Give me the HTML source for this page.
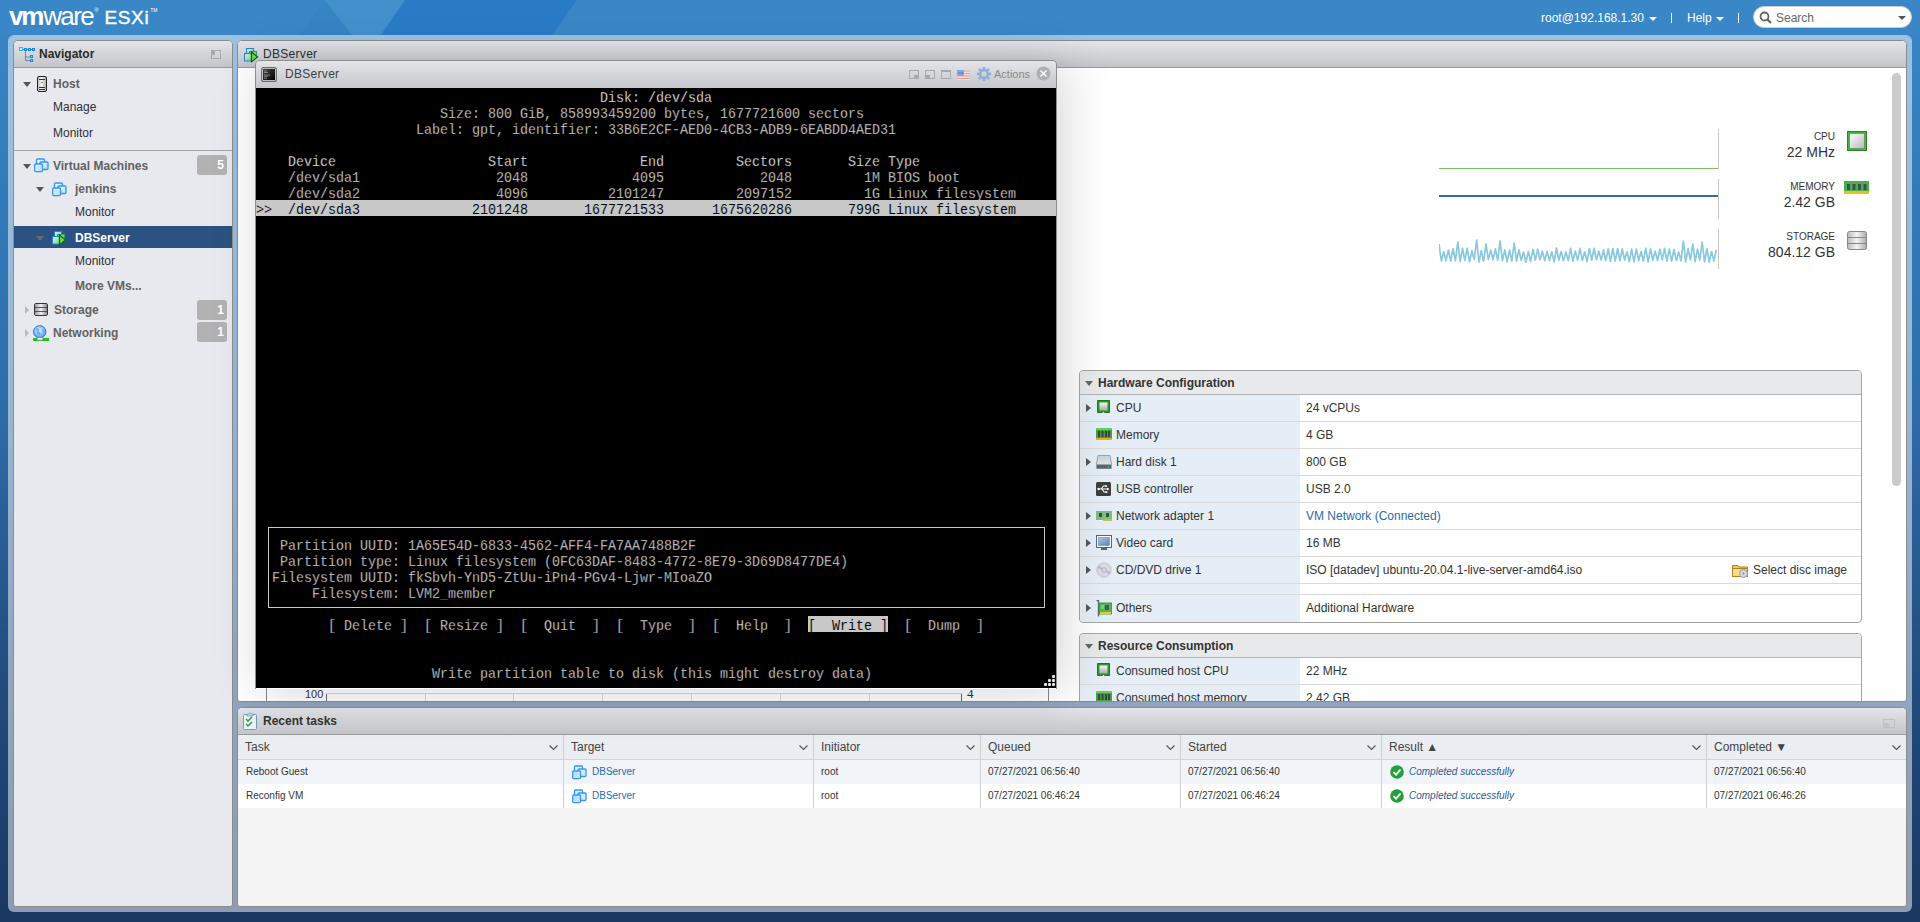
<!DOCTYPE html>
<html><head><meta charset="utf-8">
<style>
*{box-sizing:border-box;margin:0;padding:0}
html,body{width:1920px;height:922px;overflow:hidden}
body{position:relative;font-family:"Liberation Sans",sans-serif;font-size:12px;color:#333;
background:linear-gradient(to bottom,#3987c6 0px,#3784c4 40px,#2f6dab 400px,#224a7b 700px,#1a3862 922px)}
.abs{position:absolute}
.th{position:absolute;top:0;height:24px;border-right:1px solid #d0d0d0}
.th span{position:absolute;left:7px;top:5px;font-size:12px;color:#444;white-space:nowrap}
.chev{position:absolute;top:10px}
.tr{position:absolute;left:0;width:1668px;height:24px}
.tc{position:absolute;top:0;height:24px;border-right:1px solid #d0d0d0}
.td{position:absolute;top:6px;font-size:10px;color:#333;white-space:nowrap}
.td.link{color:#2c6ca8}
.td.ok{color:#2c5a98;font-style:italic}
.lbl{left:1547px;width:50px;text-align:right;font-size:10px;color:#333;line-height:12px}
.val{left:1497px;width:100px;text-align:right;font-size:14px;color:#333;line-height:18px}
.box{position:absolute;border:1px solid #a4a4a4;border-radius:4px;background:#fff;overflow:hidden}
.bh{position:absolute;left:0;top:0;width:100%;height:24px;background:#e8e9eb;border-bottom:1px solid #b4b4b4}
.bt{position:absolute;left:18px;top:5px;font-weight:bold;font-size:12px;color:#333}
.hr{position:absolute;left:0;width:781px;border-bottom:1px solid #dadada}
.hl{position:absolute;left:0;top:0;width:220px;height:100%;background:#e5eef6}
.ar{position:absolute;left:6px;width:0;height:0;border-top:4px solid transparent;border-bottom:4px solid transparent;border-left:5px solid #555}
.hlab{position:absolute;left:36px;top:6px;font-size:12px;color:#333;white-space:nowrap}
.hval{position:absolute;left:226px;top:6px;font-size:12px;color:#333;white-space:nowrap}
.hval.link{color:#2c6ca8}
#hdr{left:0;top:0;width:1920px;height:35px;background:#3987c7;overflow:hidden}
#frame{left:8px;top:35px;width:1904px;height:877px;border-radius:6px;background:rgba(255,255,255,.5)}
.panel{position:absolute;border:1px solid #8c8c8c;border-radius:5px 5px 3px 3px;overflow:hidden}
.ph{position:absolute;left:0;top:0;right:0;height:27px;border-bottom:1px solid #9a9a9a;
background:linear-gradient(to bottom,#e4e5e9,#c4c5ca)}
.ph .t{position:absolute;top:6px;font-weight:bold;font-size:12px;color:#333}
#nav{left:13px;top:40px;width:220px;height:867px;background:#e8e9ee}
#main{left:237px;top:40px;width:1670px;height:662px;background:#fff}
#tasks{left:237px;top:707px;width:1670px;height:200px;background:#f3f3f3}
.ni{position:absolute;font-size:12px;line-height:14px;white-space:nowrap}
.ni.b{font-weight:bold;color:#626262}
.ni.r{color:#2f2f3a}
.tri{position:absolute;width:0;height:0;border-left:4px solid transparent;border-right:4px solid transparent;border-top:5px solid #555}
.trir{position:absolute;width:0;height:0;border-top:4px solid transparent;border-bottom:4px solid transparent;border-left:4px solid #b8b8b8}
.badge{position:absolute;left:183px;width:30px;height:20px;border-radius:3px;background:#b2b2b2;color:#fff;font-weight:bold;font-size:12px;text-align:right;padding-right:3px;line-height:20px}
#con{left:255px;top:60px;width:802px;height:629px;border:1px solid #8e8e8e;border-bottom:none;border-radius:5px 5px 0 0;overflow:hidden;
box-shadow:6px 2px 50px rgba(0,0,0,.17)}
#con .ph{height:28px;border-bottom:none}
#term{position:absolute;left:0px;top:27px;width:800px;height:600px;background:#000;overflow:hidden}
#term pre{position:absolute;left:0;margin-top:3px;font-family:"Liberation Mono",monospace;font-size:15px;line-height:16px;color:#e6e6e6;white-space:pre;transform:scaleX(0.88889);transform-origin:0 0;-webkit-text-stroke:0.3px #000}
#term pre.br{color:#fff}
</style></head><body>
<div id="hdr" class="abs">
  <svg class="abs" style="left:0;top:0" width="1920" height="35">
    <polygon points="324,0 405,0 381,35 352,35" fill="#4290cc"/>
    <polygon points="324,0 300,35 352,35" fill="#3584c4"/>
    <polygon points="405,0 577,0 552,35 381,35" fill="#2a7bc6"/>
  </svg>
  <div class="abs" style="left:9px;top:1px;color:#fff;white-space:nowrap">
    <span style="font-size:26px;font-weight:bold;letter-spacing:-2.2px">vm</span><span style="font-size:26px;letter-spacing:-1.6px;margin-left:1px">ware</span><span style="font-size:6px;vertical-align:13px;margin-left:1px">&#174;</span><span style="font-size:19px;margin-left:6px;letter-spacing:0.6px;vertical-align:1px;-webkit-text-stroke:0.4px #fff">ESXi</span><span style="font-size:5px;vertical-align:13px;margin-left:1px">TM</span>
  </div>
  <div class="abs" style="left:1541px;top:11px;color:#fff;font-size:12px;white-space:nowrap">root@192.168.1.30</div>
  <div class="abs" style="left:1649px;top:17px;width:0;height:0;border-left:4px solid transparent;border-right:4px solid transparent;border-top:4px solid #fff"></div>
  <div class="abs" style="left:1671px;top:13px;width:1px;height:10px;background:#fff"></div>
  <div class="abs" style="left:1687px;top:11px;color:#fff;font-size:12px">Help</div>
  <div class="abs" style="left:1716px;top:17px;width:0;height:0;border-left:4px solid transparent;border-right:4px solid transparent;border-top:4px solid #fff"></div>
  <div class="abs" style="left:1738px;top:13px;width:1px;height:10px;background:#fff"></div>
  <div class="abs" style="left:1753px;top:6px;width:159px;height:22px;border-radius:11px;background:#fff;border:1px solid #ccc"></div>
  <svg class="abs" style="left:1759px;top:11px" width="14" height="14"><circle cx="5.5" cy="5.5" r="4" fill="none" stroke="#666" stroke-width="1.8"/><line x1="8.5" y1="8.5" x2="12" y2="12" stroke="#666" stroke-width="2.2"/></svg>
  <div class="abs" style="left:1776px;top:11px;color:#666;font-size:12px">Search</div>
  <div class="abs" style="left:1898px;top:16px;width:0;height:0;border-left:4px solid transparent;border-right:4px solid transparent;border-top:4px solid #555"></div>
</div>
<div id="frame" class="abs"></div>

<div id="nav" class="panel">
  <div class="ph">
    <svg class="abs" style="left:4px;top:5px" width="18" height="18" viewBox="0 0 18 18"><path d="M5 3.5H17 M7.5 5V14.5 M7.5 11H12 M7.5 14.5H12" stroke="#6a8aaa" stroke-width="1" fill="none"/><rect x="1.5" y="1.5" width="3" height="3" fill="#d0f4ff" stroke="#40b0f0"/><rect x="6.5" y="2.5" width="2" height="2" fill="#9cd0ff" stroke="#1a84e8"/><rect x="10.5" y="2.5" width="2" height="2" fill="#9cd0ff" stroke="#1a84e8"/><rect x="14.5" y="2.5" width="2" height="2" fill="#9cd0ff" stroke="#1a84e8"/><rect x="12.5" y="9.5" width="2" height="2" fill="#9cd0ff" stroke="#1a84e8"/><rect x="12.5" y="13.5" width="2" height="2" fill="#9cd0ff" stroke="#1a84e8"/></svg>
    <span class="t" style="left:25px;top:6px;color:#2a2a2a">Navigator</span>
    <div class="abs" style="left:197px;top:9px;width:10px;height:9px;border:1px solid #a8a9ad"><div style="width:3px;height:4px;background:#a8a9ad"></div></div>
  </div>
  <div class="tri" style="left:9px;top:41px"></div>
  <svg class="abs" style="left:23px;top:35px" width="10" height="16" viewBox="0 0 10 16"><defs><linearGradient id="hg" x1="0" x2="1"><stop offset="0" stop-color="#b8b8b8"/><stop offset=".45" stop-color="#f4f4f4"/><stop offset="1" stop-color="#a8a8a8"/></linearGradient></defs><rect x="0.5" y="0.5" width="9" height="15" rx="1.5" fill="url(#hg)" stroke="#222"/><path d="M2 3.5H8 M2 11.5H8 M2 13.5H8" stroke="#333"/><rect x="4.5" y="6" width="1" height="1" fill="#333"/></svg>
  <div class="ni b" style="left:39px;top:36px">Host</div>
  <div class="ni r" style="left:39px;top:59px">Manage</div>
  <div class="ni r" style="left:39px;top:85px">Monitor</div>
  <div class="abs" style="left:0;top:109px;width:218px;height:1px;background:#a6a6a6"></div>
  <div class="tri" style="left:9px;top:123px"></div>
  <svg class="abs" style="left:20px;top:117px" width="15" height="15" viewBox="0 0 15 15"><defs><linearGradient id="vmg20117" x1="0" y1="0" x2="1" y2="1"><stop offset="0" stop-color="#f0fbff"/><stop offset="1" stop-color="#b0dcfa"/></linearGradient></defs><rect x="2.5" y="1" width="8" height="6.5" rx="1" fill="url(#vmg20117)" stroke="#3a94ec" stroke-width="1.3"/><rect x="6" y="4" width="8" height="7.5" rx="1" fill="url(#vmg20117)" stroke="#3a94ec" stroke-width="1.3"/><rect x="0.7" y="6" width="7.8" height="7.6" rx="1" fill="url(#vmg20117)" stroke="#3a94ec" stroke-width="1.3"/><path d="M2 9H7 M4 7V13" stroke="#bfe0f8" stroke-width=".6"/></svg>
  <div class="ni b" style="left:39px;top:118px">Virtual Machines</div>
  <div class="badge" style="top:114px">5</div>
  <div class="tri" style="left:22px;top:146px"></div>
  <svg class="abs" style="left:38px;top:141px" width="15" height="15" viewBox="0 0 15 15"><defs><linearGradient id="vmg38141" x1="0" y1="0" x2="1" y2="1"><stop offset="0" stop-color="#f0fbff"/><stop offset="1" stop-color="#b0dcfa"/></linearGradient></defs><rect x="2.5" y="1" width="8" height="6.5" rx="1" fill="url(#vmg38141)" stroke="#3a94ec" stroke-width="1.3"/><rect x="6" y="4" width="8" height="7.5" rx="1" fill="url(#vmg38141)" stroke="#3a94ec" stroke-width="1.3"/><rect x="0.7" y="6" width="7.8" height="7.6" rx="1" fill="url(#vmg38141)" stroke="#3a94ec" stroke-width="1.3"/><path d="M2 9H7 M4 7V13" stroke="#bfe0f8" stroke-width=".6"/></svg>
  <div class="ni b" style="left:61px;top:141px">jenkins</div>
  <div class="ni r" style="left:61px;top:164px">Monitor</div>
  <div class="abs" style="left:0;top:185px;width:218px;height:22px;background:#2c5281"></div>
  <div class="tri" style="left:22px;top:195px;border-top-color:#6b6b6b"></div>
  <svg class="abs" style="left:38px;top:190px" width="15" height="15" viewBox="0 0 15 15"><defs><linearGradient id="dbgn" x1="0" y1="0" x2="1" y2="1"><stop offset="0" stop-color="#e8fbff"/><stop offset="1" stop-color="#70d070"/></linearGradient></defs><rect x="2.5" y="0.5" width="7" height="6" fill="url(#dbgn)" stroke="#2a84e8" stroke-width="1.1"/><rect x="5.5" y="3.5" width="7" height="6" fill="#8ad890" stroke="#2aa080" stroke-width="1.1"/><rect x="0.5" y="5.5" width="7" height="7.5" fill="url(#dbgn)" stroke="#2a84e8" stroke-width="1.1"/><path d="M7.5 4 L13.6 9 L7.5 13.8 Z" fill="#74d848" stroke="#0a6a0a" stroke-width="1.2" stroke-linejoin="miter"/></svg>
  <div class="ni b" style="left:61px;top:190px;color:#fff">DBServer</div>
  <div class="ni r" style="left:61px;top:213px">Monitor</div>
  <div class="ni b" style="left:61px;top:238px">More VMs...</div>
  <div class="trir" style="left:11px;top:265px"></div>
  <svg class="abs" style="left:20px;top:262px" width="14" height="13" viewBox="0 0 14 13"><rect x="0.5" y="0.5" width="13" height="12" rx="1.5" fill="#ddd" stroke="#333"/><rect x="1" y="1" width="12" height="11" fill="url(#sg)"/><path d="M1 4.5H13 M1 8.5H13" stroke="#555"/><defs><linearGradient id="sg" x1="0" x2="1"><stop offset="0" stop-color="#9a9a9a"/><stop offset=".5" stop-color="#f2f2f2"/><stop offset="1" stop-color="#8a8a8a"/></linearGradient></defs></svg>
  <div class="ni b" style="left:40px;top:262px">Storage</div>
  <div class="badge" style="top:259px">1</div>
  <div class="trir" style="left:11px;top:288px"></div>
  <svg class="abs" style="left:18px;top:284px" width="17" height="17" viewBox="0 0 17 17"><defs><radialGradient id="glg" cx=".45" cy=".4" r=".6"><stop offset="0" stop-color="#e8f6ff"/><stop offset=".6" stop-color="#8cc0f8"/><stop offset="1" stop-color="#4a90e8"/></radialGradient></defs><circle cx="7.7" cy="6.8" r="6.2" fill="url(#glg)" stroke="#2a7ae0" stroke-width="1"/><path d="M4 3.5 Q6 3 7.5 4.5 Q6 6 8 7.5 Q9.5 8.5 8 10.5 Q6 9.5 5 8 Q5.5 6 4 5Z" fill="#5a98e8" opacity=".7"/><path d="M10 4 Q12 5 12 7 Q11 6.5 10 5.5Z" fill="#5a98e8" opacity=".7"/><rect x="1" y="13" width="16" height="3" fill="#1cc81c"/><rect x="5" y="12.6" width="6" height="2.6" rx="1" fill="#f4f4f4" stroke="#666" stroke-width=".6"/></svg>
  <div class="ni b" style="left:39px;top:285px">Networking</div>
  <div class="badge" style="top:281px">1</div>
</div>

<div id="main" class="panel">
  <div class="ph">
    <svg class="abs" style="left:6px;top:7px" width="15" height="15" viewBox="0 0 15 15"><defs><linearGradient id="dbgm" x1="0" y1="0" x2="1" y2="1"><stop offset="0" stop-color="#e8fbff"/><stop offset="1" stop-color="#70d070"/></linearGradient></defs><rect x="2.5" y="0.5" width="7" height="6" fill="url(#dbgm)" stroke="#2a84e8" stroke-width="1.1"/><rect x="5.5" y="3.5" width="7" height="6" fill="#8ad890" stroke="#2aa080" stroke-width="1.1"/><rect x="0.5" y="5.5" width="7" height="7.5" fill="url(#dbgm)" stroke="#2a84e8" stroke-width="1.1"/><path d="M7.5 4 L13.6 9 L7.5 13.8 Z" fill="#74d848" stroke="#0a6a0a" stroke-width="1.2" stroke-linejoin="miter"/></svg>
    <span class="t" style="left:25px;top:6px;color:#2e2e2e;font-weight:normal;letter-spacing:0.3px">DBServer</span>
  </div>
  <!-- performance charts -->
  <div class="abs" style="left:1480px;top:88px;width:1px;height:40px;background:#c8c8c8"></div>
  <div class="abs" style="left:1201px;top:127px;width:279px;height:1px;background:#7cc05c"></div>
  <div class="abs" style="left:1480px;top:138px;width:1px;height:40px;background:#c8c8c8"></div>
  <div class="abs" style="left:1201px;top:154px;width:279px;height:2px;background:#3a68a0"></div>
  <div class="abs" style="left:1480px;top:188px;width:1px;height:40px;background:#c8c8c8"></div>
  <svg class="abs" style="left:1201px;top:190px" width="280" height="36"><polyline points="0.0,13.0 2.3,30.0 4.7,20.7 7.0,29.8 9.4,19.0 11.7,30.1 14.1,17.7 16.4,29.9 18.8,11.0 21.1,30.6 23.5,17.4 25.8,29.3 28.2,17.4 30.5,30.7 32.9,19.8 35.2,28.6 37.6,9.0 39.9,31.1 42.3,19.6 44.6,30.2 47.0,13.0 49.3,28.5 51.7,19.1 54.0,28.7 56.4,17.8 58.7,29.2 61.1,10.0 63.4,29.8 65.8,18.8 68.1,30.8 70.5,19.1 72.8,30.2 75.2,12.0 77.5,30.3 79.9,18.8 82.2,29.3 84.6,21.0 86.9,31.2 89.3,20.4 91.6,30.4 94.0,18.3 96.3,29.1 98.7,18.2 101.0,28.7 103.4,20.1 105.7,29.6 108.1,20.4 110.4,29.5 112.8,20.8 115.1,30.8 117.5,17.0 119.8,29.1 122.2,20.6 124.5,29.8 126.9,20.9 129.2,29.6 131.6,17.3 133.9,30.2 136.3,20.1 138.6,29.2 141.0,17.3 143.3,29.4 145.7,20.9 148.0,30.5 150.4,17.5 152.7,29.2 155.1,17.4 157.4,28.7 159.8,20.2 162.1,29.0 164.5,19.2 166.8,29.7 169.2,17.8 171.5,30.5 173.9,17.5 176.2,30.2 178.6,17.5 180.9,29.6 183.3,17.9 185.6,29.2 188.0,20.9 190.3,30.7 192.7,18.2 195.0,30.9 197.4,17.8 199.7,29.6 202.1,20.4 204.4,30.2 206.8,17.4 209.1,31.2 211.5,17.9 213.8,29.2 216.2,20.1 218.5,29.4 220.9,18.2 223.2,28.7 225.6,17.4 227.9,30.1 230.3,18.0 232.6,30.1 235.0,18.5 237.3,29.7 239.7,20.8 242.0,29.8 244.4,10.0 246.7,30.8 249.1,17.7 251.4,28.9 253.8,13.0 256.1,30.7 258.5,18.0 260.8,29.0 263.2,11.0 265.5,31.0 267.9,17.8 270.2,31.1 272.6,20.5 274.9,30.1 277.3,18.7" fill="none" stroke="#88c8e0" stroke-width="1.7" stroke-linejoin="round"/></svg>
  <div class="abs lbl" style="top:90px">CPU</div>
  <div class="abs val" style="top:102px">22 MHz</div>
  <div class="abs lbl" style="top:140px">MEMORY</div>
  <div class="abs val" style="top:152px">2.42 GB</div>
  <div class="abs lbl" style="top:190px">STORAGE</div>
  <div class="abs val" style="top:202px">804.12 GB</div>
  <svg class="abs" style="left:1609px;top:90px" width="20" height="20" viewBox="0 0 20 20"><rect x="0.5" y="0.5" width="19" height="19" fill="#3cb83c" stroke="#1e8a1e"/><rect x="2.5" y="2.5" width="15" height="15" fill="url(#cpug)" stroke="#6a8a6a" stroke-width=".8"/><defs><linearGradient id="cpug" x1="0" y1="0" x2="1" y2="1"><stop offset="0" stop-color="#fff"/><stop offset="1" stop-color="#b8b8b8"/></linearGradient></defs></svg>
  <svg class="abs" style="left:1606px;top:140px" width="25" height="13" viewBox="0 0 25 13"><rect x="0" y="0" width="25" height="10" fill="#48b048"/><rect x="0" y="10" width="25" height="3" fill="#e8c020"/><rect x="3" y="3" width="3" height="6" fill="#4a4a5a"/><rect x="8.5" y="3" width="3" height="6" fill="#4a4a5a"/><rect x="14" y="3" width="3" height="6" fill="#4a4a5a"/><rect x="19.5" y="3" width="3" height="6" fill="#4a4a5a"/></svg>
  <svg class="abs" style="left:1609px;top:190px" width="20" height="19" viewBox="0 0 20 19"><rect x="0.5" y="0.5" width="19" height="18" rx="2" fill="url(#stg)" stroke="#888"/><path d="M1 6.5H19 M1 12.5H19" stroke="#888"/><defs><linearGradient id="stg" x1="0" x2="1"><stop offset="0" stop-color="#bbb"/><stop offset=".5" stop-color="#f4f4f4"/><stop offset="1" stop-color="#aaa"/></linearGradient></defs></svg>
  <!-- scrollbar -->
  <div class="abs" style="left:1654px;top:32px;width:9px;height:413px;border-radius:5px;background:#cbcbcb"></div>
  <div class="box" style="left:841px;top:329px;width:783px;height:253px">
  <div class="bh"><div class="tri" style="left:5px;top:10px;border-top-color:#666"></div><span class="bt">Hardware Configuration</span></div>
  <div class="abs" style="left:0;top:24px;width:781px;height:228px"><div class="hr" style="top:0px;height:27px"><div class="hl"></div><div class="ar" style="top:9px"></div><svg class="abs" style="left:17px;top:5px" width="13" height="13" viewBox="0 0 13 13"><path d="M0.5 0.5H12.5V12.5H8L6.5 11.5L5 12.5H0.5Z" fill="#2c9a2c" stroke="#1a7a1a"/><rect x="2.5" y="2.5" width="8" height="8" fill="url(#cpug2)"/><defs><linearGradient id="cpug2" x1="0" y1="0" x2="0" y2="1"><stop offset="0" stop-color="#f8f8f8"/><stop offset="1" stop-color="#a8a8a8"/></linearGradient></defs></svg><span class="hlab">CPU</span><span class="hval">24 vCPUs</span></div><div class="hr" style="top:27px;height:27px"><div class="hl"></div><svg class="abs" style="left:16px;top:6px" width="16" height="12" viewBox="0 0 16 12"><rect x="0" y="0" width="16" height="10" fill="#3aa83a"/><rect x="0" y="0" width="16" height="2" fill="#6ccc5c"/><rect x="0" y="10" width="16" height="2" fill="#e8b020"/><rect x="2" y="3" width="2" height="6" fill="#4a3a4a"/><rect x="5.5" y="3" width="2" height="6" fill="#4a3a4a"/><rect x="9" y="3" width="2" height="6" fill="#4a3a4a"/><rect x="12" y="3" width="2" height="6" fill="#4a3a4a"/></svg><span class="hlab">Memory</span><span class="hval">4 GB</span></div><div class="hr" style="top:54px;height:27px"><div class="hl"></div><div class="ar" style="top:9px"></div><svg class="abs" style="left:16px;top:6px" width="16" height="14" viewBox="0 0 16 14"><path d="M2 0.5H14L15.5 9V13.5H0.5V9Z" fill="url(#hdg)" stroke="#9aa4ac"/><rect x="1" y="9.5" width="14" height="4" fill="#5a6670"/><rect x="12" y="11" width="1" height="1.5" fill="#4c4"/><defs><linearGradient id="hdg" x1="0" y1="0" x2="0" y2="1"><stop offset="0" stop-color="#c8d0d8"/><stop offset="1" stop-color="#e8ecf0"/></linearGradient></defs></svg><span class="hlab">Hard disk 1</span><span class="hval">800 GB</span></div><div class="hr" style="top:81px;height:27px"><div class="hl"></div><svg class="abs" style="left:16px;top:6px" width="15" height="14" viewBox="0 0 15 14"><rect x="0" y="0" width="15" height="14" rx="1.5" fill="#3e3e3e"/><path d="M2 7H13 M5 7L7.5 4H9.5 M6 7L8 10H10" stroke="#fff" stroke-width="1.1" fill="none"/><path d="M13 7L11 5.5V8.5Z" fill="#fff"/><circle cx="2.5" cy="7" r="1.2" fill="#fff"/><circle cx="10" cy="4" r="1" fill="#fff"/><rect x="9.5" y="9.2" width="1.8" height="1.8" fill="#fff"/></svg><span class="hlab">USB controller</span><span class="hval">USB 2.0</span></div><div class="hr" style="top:108px;height:27px"><div class="hl"></div><div class="ar" style="top:9px"></div><svg class="abs" style="left:16px;top:8px" width="16" height="10" viewBox="0 0 16 10"><rect x="0" y="0" width="16" height="9" fill="#7cc07c"/><rect x="3" y="2" width="3" height="4" fill="#3a4a5a"/><rect x="10" y="2" width="3" height="4" fill="#3a4a5a"/><rect x="7" y="8" width="9" height="2" fill="#c8c040"/><rect x="3" y="9" width="3" height="1" fill="#fff"/></svg><span class="hlab">Network adapter 1</span><span class="hval link">VM Network (Connected)</span></div><div class="hr" style="top:135px;height:27px"><div class="hl"></div><div class="ar" style="top:9px"></div><svg class="abs" style="left:16px;top:5px" width="16" height="15" viewBox="0 0 16 15"><rect x="0.5" y="0.5" width="15" height="12" fill="#fff" stroke="#4a6a8a"/><rect x="2.5" y="2.5" width="11" height="8" fill="url(#vg)" stroke="#5a7a9a" stroke-width=".5"/><rect x="5" y="13" width="6" height="2" fill="#4a6a8a"/><defs><linearGradient id="vg" x1="0" y1="0" x2="1" y2="1"><stop offset="0" stop-color="#a8c8e8"/><stop offset="1" stop-color="#5a88b8"/></linearGradient></defs></svg><span class="hlab">Video card</span><span class="hval">16 MB</span></div><div class="hr" style="top:162px;height:27px"><div class="hl"></div><div class="ar" style="top:9px"></div><svg class="abs" style="left:16px;top:5px" width="16" height="16" viewBox="0 0 16 16"><circle cx="8" cy="8" r="7.3" fill="url(#cdg)" stroke="#c4c4c8" stroke-width=".7"/><path d="M8 8L3 3.5A7 7 0 0 0 1.5 6Z M8 8L13 12.5A7 7 0 0 0 14.5 10Z" fill="#b0a0e0" opacity=".7"/><circle cx="8" cy="8" r="2.4" fill="#dde" stroke="#9ab" stroke-width="1"/><defs><radialGradient id="cdg"><stop offset="0" stop-color="#f0f0f4"/><stop offset="1" stop-color="#d0d0d8"/></radialGradient></defs></svg><span class="hlab">CD/DVD drive 1</span><span class="hval">ISO [datadev] ubuntu-20.04.1-live-server-amd64.iso</span><svg class="abs" style="left:652px;top:6px" width="17" height="15" viewBox="0 0 17 15"><path d="M0.5 2.5H6L7 4H15.5V13.5H0.5Z" fill="#f0c860" stroke="#b08020"/><path d="M0.5 5.5H15.5V13.5H0.5Z" fill="#f8dc88" stroke="#b08020"/><circle cx="11.5" cy="10.5" r="4" fill="#d8d8dc" stroke="#999"/><circle cx="11.5" cy="10.5" r="1" fill="#888"/></svg><span class="hval" style="left:673px">Select disc image</span></div><div class="hr" style="top:189px;height:11px"><div class="hl"></div></div><div class="hr" style="top:200px;height:28px"><div class="hl"></div><div class="ar" style="top:9px"></div><svg class="abs" style="left:16px;top:5px" width="16" height="17" viewBox="0 0 16 17"><path d="M0.5 0.5H2.5V16.5" stroke="#5a6a8a" stroke-width="1.4" fill="none"/><rect x="3" y="3" width="13" height="11" fill="#52b852" stroke="#2a8a2a" stroke-width=".8"/><rect x="9" y="5" width="4" height="5" fill="#555"/><rect x="4" y="12" width="11" height="2" fill="#e8d030"/><path d="M5 6H8M5 8H8" stroke="#d8f0a0" stroke-width=".8"/></svg><span class="hlab">Others</span><span class="hval">Additional Hardware</span></div></div>
</div>
  <div class="box" style="left:841px;top:592px;width:783px;height:120px">
  <div class="bh"><div class="tri" style="left:5px;top:10px;border-top-color:#666"></div><span class="bt">Resource Consumption</span></div>
  <div class="abs" style="left:0;top:24px;width:781px;height:90px"><div class="hr" style="top:0px;height:27px"><div class="hl"></div><svg class="abs" style="left:17px;top:5px" width="13" height="13" viewBox="0 0 13 13"><path d="M0.5 0.5H12.5V12.5H8L6.5 11.5L5 12.5H0.5Z" fill="#2c9a2c" stroke="#1a7a1a"/><rect x="2.5" y="2.5" width="8" height="8" fill="url(#cpug2)"/><defs><linearGradient id="cpug2" x1="0" y1="0" x2="0" y2="1"><stop offset="0" stop-color="#f8f8f8"/><stop offset="1" stop-color="#a8a8a8"/></linearGradient></defs></svg><span class="hlab">Consumed host CPU</span><span class="hval">22 MHz</span></div><div class="hr" style="top:27px;height:27px"><div class="hl"></div><svg class="abs" style="left:16px;top:6px" width="16" height="12" viewBox="0 0 16 12"><rect x="0" y="0" width="16" height="10" fill="#3aa83a"/><rect x="0" y="0" width="16" height="2" fill="#6ccc5c"/><rect x="0" y="10" width="16" height="2" fill="#e8b020"/><rect x="2" y="3" width="2" height="6" fill="#4a3a4a"/><rect x="5.5" y="3" width="2" height="6" fill="#4a3a4a"/><rect x="9" y="3" width="2" height="6" fill="#4a3a4a"/><rect x="12" y="3" width="2" height="6" fill="#4a3a4a"/></svg><span class="hlab">Consumed host memory</span><span class="hval">2.42 GB</span></div></div>
</div>
  <!-- chart axis under console -->
  <div class="abs" style="left:28px;top:647px;width:1px;height:14px;background:#888"></div>
  <div class="abs" style="left:88px;top:652px;width:636px;height:1px;background:#d6d6d6"></div>
  <div class="abs" style="left:67px;top:647px;font-size:11px;color:#333">100</div>
  <div class="abs" style="left:88px;top:653px;width:1px;height:7px;background:#666"></div>
  <div class="abs" style="left:187px;top:653px;width:1px;height:7px;background:#d8d8d8"></div><div class="abs" style="left:275px;top:653px;width:1px;height:7px;background:#d8d8d8"></div><div class="abs" style="left:364px;top:653px;width:1px;height:7px;background:#d8d8d8"></div><div class="abs" style="left:453px;top:653px;width:1px;height:7px;background:#d8d8d8"></div><div class="abs" style="left:542px;top:653px;width:1px;height:7px;background:#d8d8d8"></div><div class="abs" style="left:631px;top:653px;width:1px;height:7px;background:#d8d8d8"></div>
  <div class="abs" style="left:723px;top:653px;width:1px;height:7px;background:#666"></div>
  <div class="abs" style="left:729px;top:645px;font-family:'Liberation Serif',serif;font-size:13px;color:#333">4</div>
  <div class="abs" style="left:810px;top:647px;width:1px;height:14px;background:#888"></div>
</div>

<div id="tasks" class="panel">
  <div class="ph">
    <svg class="abs" style="left:5px;top:4px" width="14" height="18" viewBox="0 0 14 18"><rect x="0.5" y="2.5" width="13" height="15" rx="1" fill="#eaf4fc" stroke="#7a9ab8"/><path d="M4 2.5 Q7 -0.5 10 2.5 V4 H4Z" fill="#bfe0f8" stroke="#5a9ad8" stroke-width=".8"/><path d="M3 7L5 9L9 5 M3 12L5 14L9 10" stroke="#2aa02a" stroke-width="1.4" fill="none"/></svg>
    <span class="t" style="left:25px;top:6px;color:#333">Recent tasks</span>
    <div class="abs" style="left:1645px;top:11px;width:12px;height:9px;border:1px solid #c0c1c5"><div style="position:absolute;left:0;bottom:0;width:5px;height:4px;background:#c0c1c5"></div></div>
  </div>
  <div class="abs" style="left:0;top:27px;width:1668px;height:25px;background:#eaedf1;border-bottom:1px solid #d4d4d4"><div class="th" style="left:0px;width:326px"><span>Task</span><svg class="chev" style="left:311px" width="9" height="6" viewBox="0 0 9 6"><path d="M0.5 0.5L4.5 4.5L8.5 0.5" stroke="#555" stroke-width="1.2" fill="none"/></svg></div><div class="th" style="left:325px;width:251px"><span style="left:8px">Target</span><svg class="chev" style="left:236px" width="9" height="6" viewBox="0 0 9 6"><path d="M0.5 0.5L4.5 4.5L8.5 0.5" stroke="#555" stroke-width="1.2" fill="none"/></svg></div><div class="th" style="left:575px;width:168px"><span style="left:8px">Initiator</span><svg class="chev" style="left:153px" width="9" height="6" viewBox="0 0 9 6"><path d="M0.5 0.5L4.5 4.5L8.5 0.5" stroke="#555" stroke-width="1.2" fill="none"/></svg></div><div class="th" style="left:742px;width:201px"><span style="left:8px">Queued</span><svg class="chev" style="left:186px" width="9" height="6" viewBox="0 0 9 6"><path d="M0.5 0.5L4.5 4.5L8.5 0.5" stroke="#555" stroke-width="1.2" fill="none"/></svg></div><div class="th" style="left:942px;width:202px"><span style="left:8px">Started</span><svg class="chev" style="left:187px" width="9" height="6" viewBox="0 0 9 6"><path d="M0.5 0.5L4.5 4.5L8.5 0.5" stroke="#555" stroke-width="1.2" fill="none"/></svg></div><div class="th" style="left:1143px;width:326px"><span style="left:8px">Result ▲</span><svg class="chev" style="left:311px" width="9" height="6" viewBox="0 0 9 6"><path d="M0.5 0.5L4.5 4.5L8.5 0.5" stroke="#555" stroke-width="1.2" fill="none"/></svg></div><div class="th" style="left:1468px;width:201px"><span style="left:8px">Completed ▼</span><svg class="chev" style="left:186px" width="9" height="6" viewBox="0 0 9 6"><path d="M0.5 0.5L4.5 4.5L8.5 0.5" stroke="#555" stroke-width="1.2" fill="none"/></svg></div></div>
  <div class="tr" style="top:52px;background:#f0f3f8"><div class="tc" style="left:0px;width:326px"><span class="td" style="left:8px">Reboot Guest</span></div><div class="tc" style="left:325px;width:251px"><svg class="abs" style="left:9px;top:5px" width="15" height="15" viewBox="0 0 15 15"><rect x="2.5" y="1" width="8" height="6.5" rx="1" fill="#d8f0ff" stroke="#3a94ec" stroke-width="1.3"/><rect x="6" y="4" width="8" height="7.5" rx="1" fill="#d0ecff" stroke="#3a94ec" stroke-width="1.3"/><rect x="0.7" y="6" width="7.8" height="7.6" rx="1" fill="#c8e8ff" stroke="#3a94ec" stroke-width="1.3"/><path d="M2 9H7 M4 7V13" stroke="#a8d4f8" stroke-width=".6"/></svg><span class="td link" style="left:29px">DBServer</span></div><div class="tc" style="left:575px;width:168px"><span class="td" style="left:8px">root</span></div><div class="tc" style="left:742px;width:201px"><span class="td" style="left:8px">07/27/2021 06:56:40</span></div><div class="tc" style="left:942px;width:202px"><span class="td" style="left:8px">07/27/2021 06:56:40</span></div><div class="tc" style="left:1143px;width:326px"><svg class="abs" style="left:9px;top:5px" width="14" height="14" viewBox="0 0 14 14"><circle cx="7" cy="7" r="6.8" fill="#23a03a"/><path d="M3.5 7.2L6 9.7L10.5 4.5" stroke="#fff" stroke-width="1.8" fill="none"/></svg><span class="td ok" style="left:28px">Completed successfully</span></div><div class="tc" style="left:1468px;width:201px"><span class="td" style="left:8px">07/27/2021 06:56:40</span></div></div><div class="tr" style="top:76px;background:#fff"><div class="tc" style="left:0px;width:326px"><span class="td" style="left:8px">Reconfig VM</span></div><div class="tc" style="left:325px;width:251px"><svg class="abs" style="left:9px;top:5px" width="15" height="15" viewBox="0 0 15 15"><rect x="2.5" y="1" width="8" height="6.5" rx="1" fill="#d8f0ff" stroke="#3a94ec" stroke-width="1.3"/><rect x="6" y="4" width="8" height="7.5" rx="1" fill="#d0ecff" stroke="#3a94ec" stroke-width="1.3"/><rect x="0.7" y="6" width="7.8" height="7.6" rx="1" fill="#c8e8ff" stroke="#3a94ec" stroke-width="1.3"/><path d="M2 9H7 M4 7V13" stroke="#a8d4f8" stroke-width=".6"/></svg><span class="td link" style="left:29px">DBServer</span></div><div class="tc" style="left:575px;width:168px"><span class="td" style="left:8px">root</span></div><div class="tc" style="left:742px;width:201px"><span class="td" style="left:8px">07/27/2021 06:46:24</span></div><div class="tc" style="left:942px;width:202px"><span class="td" style="left:8px">07/27/2021 06:46:24</span></div><div class="tc" style="left:1143px;width:326px"><svg class="abs" style="left:9px;top:5px" width="14" height="14" viewBox="0 0 14 14"><circle cx="7" cy="7" r="6.8" fill="#23a03a"/><path d="M3.5 7.2L6 9.7L10.5 4.5" stroke="#fff" stroke-width="1.8" fill="none"/></svg><span class="td ok" style="left:28px">Completed successfully</span></div><div class="tc" style="left:1468px;width:201px"><span class="td" style="left:8px">07/27/2021 06:46:26</span></div></div>
</div>

<div id="con" class="abs">
  <div class="ph">
    <svg class="abs" style="left:5px;top:6px" width="16" height="15" viewBox="0 0 16 15"><rect x="0.6" y="0.6" width="14.8" height="13.8" rx="2" fill="#d4d4d6" stroke="#6a6a6a" stroke-width="1.1"/><defs><linearGradient id="tg" x1="0" y1="0" x2="1" y2="1"><stop offset="0" stop-color="#444"/><stop offset="1" stop-color="#000"/></linearGradient></defs><rect x="2" y="2" width="12" height="11" fill="url(#tg)"/><path d="M3 4H6 M3 5.5H7 M3 8H9 M3 9.3H7 M3 11.2H6" stroke="#999" stroke-width=".8"/></svg>
    <span class="t" style="left:29px;top:6px;font-weight:normal;color:#404040;letter-spacing:0.3px">DBServer</span>
    <div class="abs" style="left:653px;top:9px;width:10px;height:9px;border:1px solid #a8a9ad"><div style="position:absolute;right:0;bottom:0;width:4px;height:3px;background:#a8a9ad"></div></div>
    <div class="abs" style="left:669px;top:9px;width:10px;height:9px;border:1px solid #a8a9ad"><div style="position:absolute;left:0;bottom:0;width:4px;height:3px;background:#a8a9ad"></div></div>
    <div class="abs" style="left:685px;top:9px;width:10px;height:9px;border:1px solid #a8a9ad;border-top-width:2px"></div>
    <svg class="abs" style="left:701px;top:9px" width="13" height="10" viewBox="0 0 13 10" opacity=".8"><rect x="0" y="0" width="13" height="10" fill="#f4eaea"/><path d="M0 1H13M0 3.5H13M0 6H13M0 8.5H13" stroke="#e88a80" stroke-width="1.1"/><rect x="0" y="0" width="7" height="6" fill="#7a98e6"/><circle cx="2.5" cy="3" r="1.3" fill="#5a7ad8"/><circle cx="5" cy="3" r="1.3" fill="#5a7ad8"/></svg>
    <svg class="abs" style="left:721px;top:6px" width="14" height="14" viewBox="0 0 14 14"><path d="M6.16 0.05 L7.84 0.05 L8.03 2.21 L9.66 2.88 L11.32 1.49 L12.51 2.68 L11.12 4.34 L11.79 5.97 L13.95 6.16 L13.95 7.84 L11.79 8.03 L11.12 9.66 L12.51 11.32 L11.32 12.51 L9.66 11.12 L8.03 11.79 L7.84 13.95 L6.16 13.95 L5.97 11.79 L4.34 11.12 L2.68 12.51 L1.49 11.32 L2.88 9.66 L2.21 8.03 L0.05 7.84 L0.05 6.16 L2.21 5.97 L2.88 4.34 L1.49 2.68 L2.68 1.49 L4.34 2.88 L5.97 2.21 Z" fill="#8ab2e4" stroke="#7a9ed0" stroke-width=".5"/><circle cx="7" cy="7" r="2.9" fill="#d2d3d7" stroke="#a8b0bc" stroke-width=".7"/></svg>
    <span class="abs" style="left:738px;top:7px;font-size:11px;color:#8a8a8a">Actions</span>
    <svg class="abs" style="left:780px;top:5px" width="15" height="15" viewBox="0 0 15 15"><circle cx="7.5" cy="7.5" r="7" fill="#aeafb2"/><path d="M4.5 4.5L10.5 10.5M10.5 4.5L4.5 10.5" stroke="#fff" stroke-width="1.4"/></svg>
  </div>
  <div id="term">
<div style="position:absolute;left:796px;top:587px;width:3px;height:3px;background:#e8e6dc;border-radius:1px"></div><div style="position:absolute;left:792px;top:591px;width:3px;height:3px;background:#e8e6dc;border-radius:1px"></div><div style="position:absolute;left:796px;top:591px;width:3px;height:3px;background:#e8e6dc;border-radius:1px"></div><div style="position:absolute;left:788px;top:595px;width:3px;height:3px;background:#e8e6dc;border-radius:1px"></div><div style="position:absolute;left:792px;top:595px;width:3px;height:3px;background:#e8e6dc;border-radius:1px"></div><div style="position:absolute;left:796px;top:595px;width:3px;height:3px;background:#e8e6dc;border-radius:1px"></div>
<div style="position:absolute;left:12px;top:439px;width:777px;height:81px;border:1px solid #c8c8c8"></div>
<pre style="top:0px" class="br">                                           Disk: /dev/sda</pre>
<pre style="top:16px">                       Size: 800 GiB, 858993459200 bytes, 1677721600 sectors</pre>
<pre style="top:32px">                    Label: gpt, identifier: 33B6E2CF-AED0-4CB3-ADB9-6EABDD4AED31</pre>
<pre style="top:64px" class="br">    Device                   Start              End         Sectors       Size Type</pre>
<pre style="top:80px">    /dev/sda1                 2048             4095            2048         1M BIOS boot</pre>
<pre style="top:96px">    /dev/sda2                 4096          2101247         2097152         1G Linux filesystem</pre>
<div style="position:absolute;left:0;top:112px;width:800px;height:16px;background:#c8c8c8"></div>
<pre style="top:112px;color:#000;-webkit-text-stroke:0.1px #c8c8c8">&gt;&gt;  /dev/sda3              2101248       1677721533      1675620286       799G Linux filesystem</pre>
<pre style="top:448px">   Partition UUID: 1A65E54D-6833-4562-AFF4-FA7AA7488B2F</pre>
<pre style="top:464px">   Partition type: Linux filesystem (0FC63DAF-8483-4772-8E79-3D69D8477DE4)</pre>
<pre style="top:480px">  Filesystem UUID: fkSbvh-YnD5-ZtUu-iPn4-PGv4-Ljwr-MIoaZO</pre>
<pre style="top:496px">       Filesystem: LVM2_member</pre>
<div style="position:absolute;left:552px;top:528px;width:80px;height:16px;background:#c8c8c8"></div>
<pre style="top:528px">         [ Delete ]  [ Resize ]  [  Quit  ]  [  Type  ]  [  Help  ]              [  Dump  ]</pre>
<pre style="top:528px;color:#000;-webkit-text-stroke:0.1px #c8c8c8">                                                                     [  Write ]</pre>
<pre style="top:576px">                      Write partition table to disk (this might destroy data)</pre>

</div>
</div>
</body></html>
